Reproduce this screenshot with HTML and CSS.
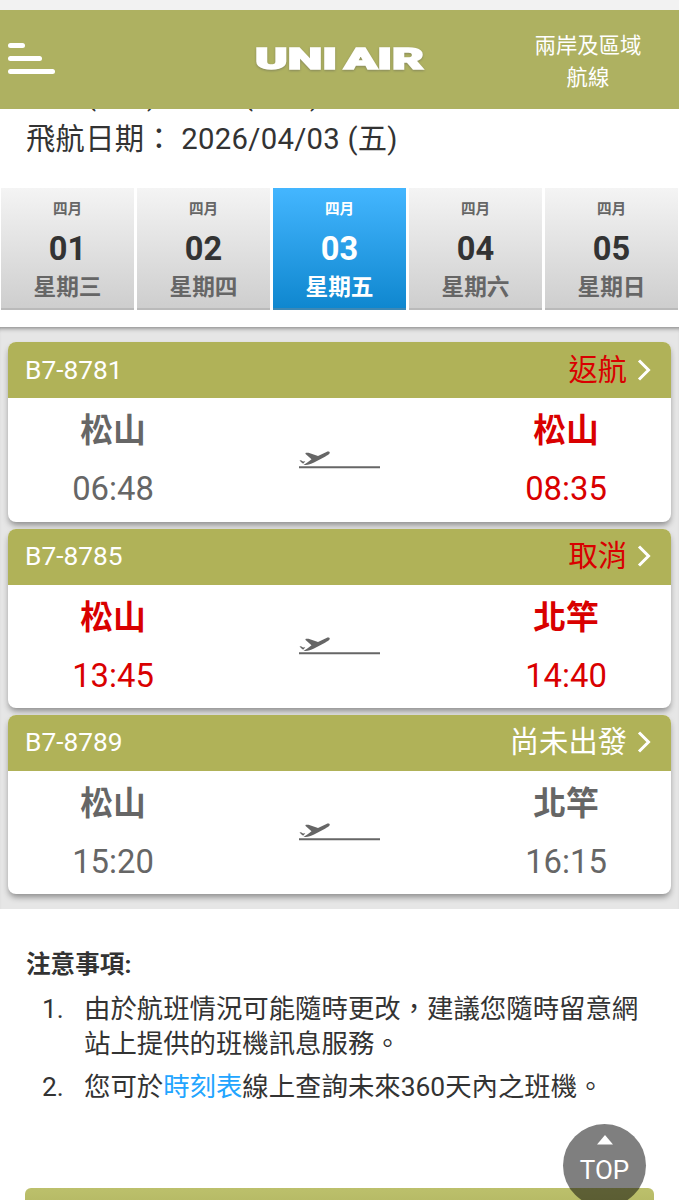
FILE: index.html
```
<!DOCTYPE html>
<html lang="zh-Hant">
<head>
    <meta charset="UTF-8">
    <meta name="viewport" content="width=device-width, initial-scale=1.0">
    <title>UNI AIR</title>
    <link rel="stylesheet" href="styles.css">
</head>
<body>
    <header class="header">
        <div class="menu">
            <span class="bar short"></span>
            <span class="bar medium"></span>
            <span class="bar"></span>
        </div>
        <svg class="logo" width="180" height="40" viewBox="0 0 180 40">
            <text x="5" y="29" textLength="82" lengthAdjust="spacingAndGlyphs">UNI</text>
            <text x="94" y="29" textLength="80" lengthAdjust="spacingAndGlyphs">AIR</text>
        </svg>
        <a class="region">兩岸及區域<br>航線</a>
    </header>

    <div class="summary">
        <div class="route"><span>(</span><span>)</span><span>(</span><span>)</span></div>
        <div class="date">飛航日期： 2026/04/03 (五)</div>
    </div>

    <nav class="days">
        <div class="day"><small>四月</small><b>01</b><span>星期三</span></div>
        <div class="day"><small>四月</small><b>02</b><span>星期四</span></div>
        <div class="day active"><small>四月</small><b>03</b><span>星期五</span></div>
        <div class="day"><small>四月</small><b>04</b><span>星期六</span></div>
        <div class="day"><small>四月</small><b>05</b><span>星期日</span></div>
    </nav>

    <main class="flights">
        <section class="card">
            <div class="card-head">
                <span class="number">B7-8781</span>
                <span class="status red">返航</span>
                <svg class="arrow" width="14" height="24" viewBox="0 0 14 24"><path d="M2 2.500L11.500 12L2 21.500"/></svg>
            </div>
            <div class="card-body">
                <div class="stop"><b>松山</b><span>06:48</span></div>
                <svg class="plane" width="84" height="24" viewBox="0 0 84 24"><use href="#plane"/></svg>
                <div class="stop red"><b>松山</b><span>08:35</span></div>
            </div>
        </section>
        <section class="card">
            <div class="card-head">
                <span class="number">B7-8785</span>
                <span class="status red">取消</span>
                <svg class="arrow" width="14" height="24" viewBox="0 0 14 24"><path d="M2 2.500L11.500 12L2 21.500"/></svg>
            </div>
            <div class="card-body">
                <div class="stop red"><b>松山</b><span>13:45</span></div>
                <svg class="plane" width="84" height="24" viewBox="0 0 84 24"><use href="#plane"/></svg>
                <div class="stop red"><b>北竿</b><span>14:40</span></div>
            </div>
        </section>
        <section class="card">
            <div class="card-head">
                <span class="number">B7-8789</span>
                <span class="status">尚未出發</span>
                <svg class="arrow" width="14" height="24" viewBox="0 0 14 24"><path d="M2 2.500L11.500 12L2 21.500"/></svg>
            </div>
            <div class="card-body">
                <div class="stop"><b>松山</b><span>15:20</span></div>
                <svg class="plane" width="84" height="24" viewBox="0 0 84 24"><use href="#plane"/></svg>
                <div class="stop"><b>北竿</b><span>16:15</span></div>
            </div>
        </section>
    </main>

    <div class="notes">
        <h2>注意事項:</h2>
        <ol>
            <li><span class="index">1.</span><p>由於航班情況可能隨時更改，建議您隨時留意網站上提供的班機訊息服務。</p></li>
            <li><span class="index">2.</span><p>您可於<a>時刻表</a>線上查詢未來360天內之班機。</p></li>
        </ol>
    </div>

    <div class="button"></div>

    <a class="top">
        <svg width="16" height="10" viewBox="0 0 16 10"><path d="M8 0L16 9.500H0Z"/></svg>
        <span>TOP</span>
    </a>

    <!-- departing plane shared by all cards -->
    <svg class="defs" width="0" height="0">
        <symbol id="plane" viewBox="0 0 84 24">
            <path d="M1 20.200H82" class="runway"/>
            <path d="M1.500 13.500L3 13.300L5 14.600L7.300 14.200L5.500 16.400L4.300 16.200Z"/>
            <path d="M5.500 17.900C8 16.600 10.500 14.500 13.500 12.200L7.300 6.700L7.900 5.700L10.500 5.700L20 9.100L28.500 4.900C30.500 4.200 32.500 4.800 31.500 6.500C31 7.400 29 8.600 27 9.700L16 15.600C12 17.600 9 18.600 5.500 17.900Z"/>
        </symbol>
    </svg>
</body>
</html>
```

FILE: styles.css
```
* {
    box-sizing: border-box;
}
body {
    margin: 0;
    height: 1200px;
    position: relative;
    overflow: hidden;
    background: #fff;
    color: #333;
    font-family: Roboto, "Noto Sans CJK TC", sans-serif;
}

/* header */
.header {
    position: relative;
    z-index: 1;
    height: 109px;
    padding: 0 26px 0 8px;
    border-top: 10px solid #f2f2f2;
    background: #aeb161;
    display: grid;
    grid-template-columns: 1fr 180px 1fr;
    align-items: center;
}
.menu {
    display: flex;
    flex-direction: column;
    gap: 8px;
    margin-top: -2px;
}
.bar {
    width: 47px;
    height: 5px;
    border-radius: 3px;
    background: #fff;
}
.bar.medium {
    width: 34px;
}
.bar.short {
    width: 17px;
}
.logo {
    margin-left: 9px;
    overflow: visible;
    font-size: 30px;
    font-weight: 900;
    fill: #fff;
    stroke: #fff;
    stroke-width: 1.5px;
    filter: drop-shadow(0 1px 1px #85875a);
}
.region {
    width: 130px;
    justify-self: end;
    margin-top: 4px;
    color: #fff;
    font-size: 21.4px;
    line-height: 32px;
    text-align: center;
}

.summary {
    display: flow-root;
    height: 79px;
    padding-left: 26px;
    font-size: 29.3px;
}
.route {
    height: 14px;
    margin-top: -14px;
    padding-left: 60px;
    line-height: 0;
    display: grid;
    grid-template-columns: 61px 96px 67px 20px;
}
.date {
    line-height: 60px;
    letter-spacing: .27px;
    white-space: pre;
}

/* day tabs */
.days {
    display: grid;
    grid-template-columns: repeat(5, 1fr);
    gap: 3px;
    padding: 0 1px;
    height: 122px;
}
.day {
    display: flex;
    flex-direction: column;
    align-items: center;
    padding-top: 10px;
    border-bottom: 2px solid #bababa;
    background: linear-gradient(#f4f4f4, #cecece);
    color: #666;
    font-weight: bold;
}
.day small {
    font-size: 14.6px;
    line-height: 22px;
}
.day b {
    color: #333;
    font-size: 32.6px;
    font-weight: bold;
    line-height: 40px;
    margin-top: 9px;
}
.day span {
    font-size: 22.7px;
    line-height: 34px;
    margin-top: 2px;
}
.day.active {
    background: linear-gradient(#44b6ff, #0f87cf);
    border-color: #3d88b5;
}
.day.active, .day.active b {
    color: #fff;
}

/* flight cards */
.flights {
    height: 582px;
    margin-top: 17px;
    padding: 15.4px 8px 0;
    display: flex;
    flex-direction: column;
    gap: 6.8px;
    background: #e6e6e6;
    box-shadow: inset 0 5px 5px -4px #777;
}
.card {
    height: 179.4px;
    flex: none;
    border-radius: 8px;
    background: #fff;
    box-shadow: 0 4px 6px -1px rgba(0, 0, 0, .4);
    overflow: hidden;
}
.card-head {
    height: 56px;
    padding: 0 20px 1px 17px;
    display: flex;
    align-items: center;
    background: #b0b258;
    color: #fff;
}
.number {
    flex: 1;
    font-size: 26.3px;
}
.status {
    font-size: 29.3px;
    line-height: 50px;
}
.arrow {
    margin-left: 10px;
    fill: none;
    stroke: #fff;
    stroke-width: 3px;
}
.card-body {
    height: 125px;
    display: grid;
    grid-template-columns: 210px 1fr 210px;
    justify-items: center;
    color: #666;
}
.stop {
    display: flex;
    flex-direction: column;
    align-items: center;
    font-size: 32.8px;
}
.stop b {
    line-height: 48px;
    margin-top: 9px;
}
.stop span {
    line-height: 40px;
    margin-top: 14px;
}
.card .red {
    color: #d90000;
}
.plane {
    margin-top: 48.5px;
    fill: #666;
}
.runway {
    stroke: #666;
    stroke-width: 2px;
}

/* notes */
.notes {
    height: 279px;
    padding: 38px 26px 0 26px;
}
.notes h2 {
    margin: 0;
    font-size: 24.6px;
    line-height: 36px;
}
.notes ol {
    margin: 9px 0 0;
    padding: 0;
    list-style: none;
}
.notes li {
    display: flex;
    margin-bottom: 7.5px;
    font-size: 26.4px;
    line-height: 35px;
}
.index {
    width: 41px;
    margin-right: 17px;
    padding-left: 16px;
    flex: none;
}
.notes p {
    margin: 0;
}
.notes a {
    color: #22a5ff;
}

.button {
    height: 60px;
    margin: 0 25px;
    border-radius: 6px 6px 0 0;
    background: linear-gradient(#bcc06c, #a4a850);
}
.top {
    position: absolute;
    left: 563px;
    top: 1123.5px;
    width: 83px;
    height: 83px;
    border-radius: 50%;
    background: rgba(0, 0, 0, .5);
    color: #fff;
    display: flex;
    flex-direction: column;
    align-items: center;
    padding-top: 11px;
    font-size: 26px;
    line-height: 30px;
}
.top svg {
    fill: #fff;
    margin-bottom: 10px;
}
.defs {
    position: absolute;
}
```
